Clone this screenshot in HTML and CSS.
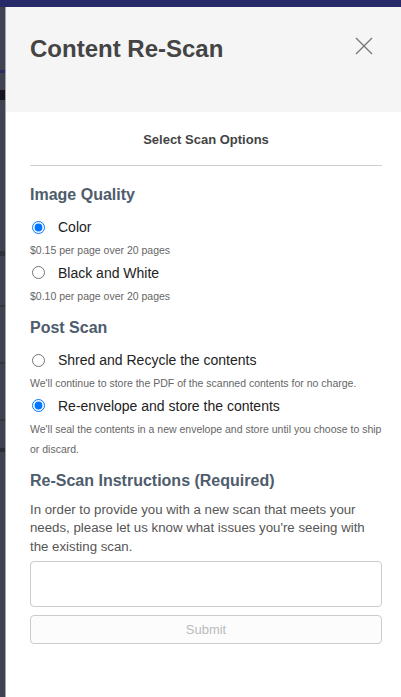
FILE: index.html
```html
<!DOCTYPE html>
<html lang="en">
<head>
<meta charset="utf-8">
<title>Content Re-Scan</title>
<link rel="stylesheet" href="styles.css">
</head>
<body>
<div class="topbar"></div>
<div class="stage">
  <div class="strip"></div>
  <div class="modal">
    <div class="modal-header">
      <h1 class="title">Content Re-Scan</h1>
      <button class="close" aria-label="Close">
        <svg width="18" height="18" viewBox="0 0 18 18"><path d="M1 1 L17 17 M17 1 L1 17" stroke="#777" stroke-width="1.3" fill="none"/></svg>
      </button>
    </div>
    <div class="modal-body">
      <div class="subtitle">Select Scan Options</div>
      <hr class="rule">

      <h2 class="section">Image Quality</h2>
      <label class="option"><input type="radio" name="q" checked><span>Color</span></label>
      <div class="desc">$0.15 per page over 20 pages</div>
      <label class="option"><input type="radio" name="q"><span>Black and White</span></label>
      <div class="desc">$0.10 per page over 20 pages</div>

      <h2 class="section">Post Scan</h2>
      <label class="option"><input type="radio" name="p"><span>Shred and Recycle the contents</span></label>
      <div class="desc">We'll continue to store the PDF of the scanned contents for no charge.</div>
      <label class="option"><input type="radio" name="p" checked><span>Re-envelope and store the contents</span></label>
      <div class="desc">We'll seal the contents in a new envelope and store until you choose to ship or discard.</div>

      <h2 class="section section-tight">Re-Scan Instructions (Required)</h2>
      <p class="para">In order to provide you with a new scan that meets your needs, please let us know what issues you're seeing with the existing scan.</p>
      <textarea class="input"></textarea>
      <button class="submit" disabled>Submit</button>
    </div>
  </div>
</div>
</body>
</html>
```
FILE: styles.css
```css
html, body {
  margin: 0;
  padding: 0;
  height: 100%;
  overflow: hidden;
}
body {
  background: #40424f;
  font-family: "Liberation Sans", Arial, Helvetica, sans-serif;
}
.topbar {
  height: 7px;
  background: #272a68;
}
.stage {
  display: flex;
  height: 690px;
}
.strip {
  width: 5px;
  flex: none;
  background:
    linear-gradient(to bottom,
      #40424f 0, #40424f 63px,
      #2a2d62 63px, #2a2d62 66px,
      #40424f 66px, #40424f 83px,
      #15161d 83px, #15161d 93px,
      #40424f 93px, #40424f 244px,
      #2e303b 244px, #2e303b 249px,
      #40424f 249px, #40424f 298px,
      #33353f 298px, #33353f 300px,
      #40424f 300px, #40424f 355px,
      #33353f 355px, #33353f 357px,
      #40424f 357px, #40424f 412px,
      #33353f 412px, #33353f 414px,
      #40424f 414px, #40424f 441px,
      #2a2c36 441px, #2a2c36 445px,
      #40424f 445px);
}
.modal {
  flex: none;
  width: 400px;
  background: #fff;
  border-left: 1px solid #a3a3ad;
}
.modal-header {
  height: 105px;
  background: #f5f5f5;
  display: flex;
  justify-content: space-between;
  align-items: flex-start;
  padding: 0 33px 0 24px;
}
.title {
  margin: 28px 0 0;
  font-size: 24px;
  line-height: 28px;
  font-weight: bold;
  color: #444;
}
.close {
  margin-top: 30px;
  padding: 0;
  border: 0;
  background: none;
  width: 18px;
  height: 18px;
  display: block;
}
.close svg { display: block; }
.modal-body {
  padding: 19px 24px 0 24px;
}
.subtitle {
  text-align: center;
  font-size: 13px;
  line-height: 18.6px;
  font-weight: bold;
  color: #444;
}
.rule {
  margin: 15px 0 0;
  border: 0;
  border-top: 1px solid #cfcfcf;
  height: 0;
}
.section {
  margin: 19px 0 12.5px;
  font-size: 16px;
  line-height: 20px;
  font-weight: bold;
  color: #4e5c6c;
}
.desc + .section {
  margin-top: 12px;
}
.section-tight {
  margin-bottom: 10px;
}
.option {
  display: flex;
  align-items: center;
  height: 20px;
  margin-bottom: 3px;
  font-size: 14px;
  color: #222;
}
.option input {
  margin: 0 13px 0 2px;
  width: 13px;
  height: 13px;
  flex: none;
}
.desc {
  font-size: 10.5px;
  line-height: 20px;
  color: #666;
  margin-bottom: 2.5px;
}
.para {
  margin: 0;
  font-size: 13.25px;
  line-height: 18.6px;
  color: #555;
}
.input {
  display: block;
  box-sizing: border-box;
  width: 100%;
  height: 46px;
  margin-top: 4.5px;
  border: 1px solid #ccc;
  border-radius: 4px;
  background: #fff;
  resize: none;
  font: inherit;
}
.submit {
  display: block;
  box-sizing: border-box;
  width: 100%;
  height: 29px;
  margin-top: 8px;
  border: 1px solid #ccc;
  border-radius: 4px;
  background: #fcfcfc;
  color: #bbb;
  font-family: "Liberation Sans", Arial, sans-serif;
  font-size: 13px;
}
```
